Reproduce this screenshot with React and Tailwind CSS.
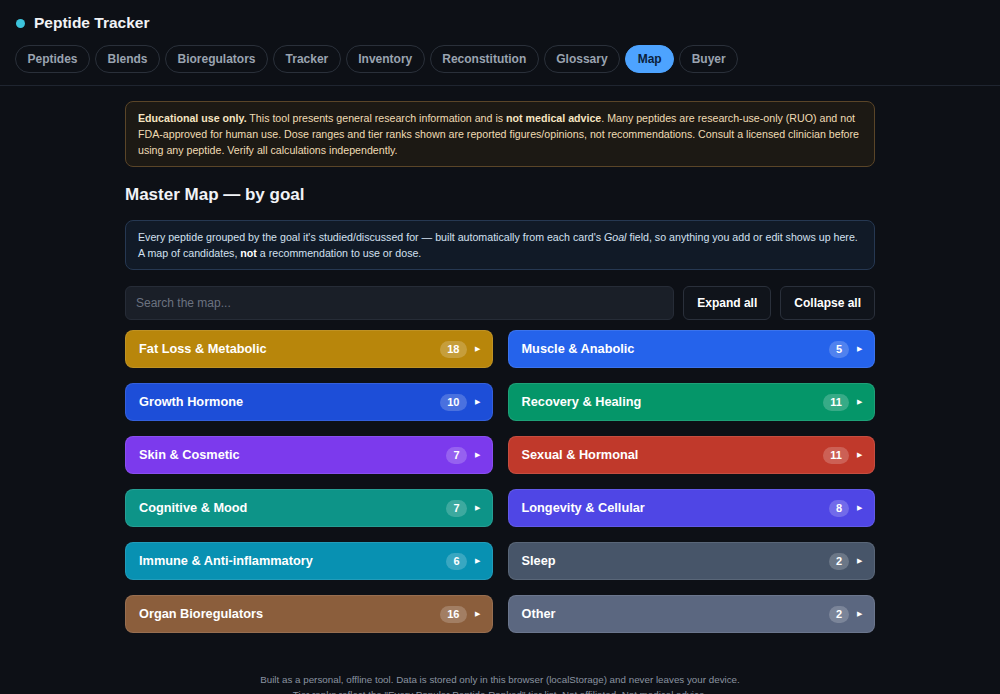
import React from "react";

const tabs = ["Peptides","Blends","Bioregulators","Tracker","Inventory","Reconstitution","Glossary","Map","Buyer"];

const groups = [
  ["Fat Loss & Metabolic", 18, "bg-[#b8860b]"],
  ["Muscle & Anabolic", 5, "bg-[#2563eb]"],
  ["Growth Hormone", 10, "bg-[#1d4ed8]"],
  ["Recovery & Healing", 11, "bg-[#059669]"],
  ["Skin & Cosmetic", 7, "bg-[#7c3aed]"],
  ["Sexual & Hormonal", 11, "bg-[#c0392b]"],
  ["Cognitive & Mood", 7, "bg-[#0d9488]"],
  ["Longevity & Cellular", 8, "bg-[#4f46e5]"],
  ["Immune & Anti-inflammatory", 6, "bg-[#0891b2]"],
  ["Sleep", 2, "bg-[#475569]"],
  ["Organ Bioregulators", 16, "bg-[#8b5e3c]"],
  ["Other", 2, "bg-[#5b6780]"],
];

export default function App() {
  return (
    <div className="min-h-screen bg-[#0d1016] text-white" style={{ fontFamily: '"Liberation Sans", Arial, sans-serif' }}>
      <header className="border-b border-[#1f2530] px-[15px] pt-[14px] pb-[12px]">
        <div className="flex items-center gap-[9px] pl-[1px] h-[18px]">
          <span className="w-[9px] h-[9px] rounded-full bg-[#3cc4dc]"></span>
          <span className="text-[15.5px] font-bold text-[#f1f3f6] leading-[18px]">Peptide Tracker</span>
        </div>
        <nav className="flex gap-[5px] mt-[13px]">
          {tabs.map((t) => (
            <span
              key={t}
              className={
                t === "Map"
                  ? "h-[28px] px-[11.5px] flex items-center rounded-full text-[12px] font-bold bg-[#4da3ff] border border-[#4da3ff] text-[#0b1f3c]"
                  : "h-[28px] px-[11.5px] flex items-center rounded-full text-[12px] font-bold border border-[#2a303a] text-[#9aa3b0]"
              }
            >
              {t}
            </span>
          ))}
        </nav>
      </header>

      <main className="w-[750px] mx-auto pt-[15px]">
        <div className="rounded-[8px] border border-[#5a4528] bg-[#1c1914] px-[12px] py-[8px] text-[10.65px] leading-[16px] text-[#f0dcb4]">
          <b className="text-[#f6e5c2]">Educational use only.</b> This tool presents general research information and is <b className="text-[#f6e5c2]">not medical advice</b>. Many peptides are research-use-only (RUO) and not FDA-approved for human use. Dose ranges and tier ranks shown are reported figures/opinions, not recommendations. Consult a licensed clinician before using any peptide. Verify all calculations independently.
        </div>

        <h2 className="text-[17px] font-bold text-[#f1f3f6] mt-[17px] leading-[22px]">Master Map — by goal</h2>

        <div className="mt-[14px] rounded-[8px] border border-[#263852] bg-[#111a27] px-[12px] py-[8px] text-[10.65px] leading-[16px] text-[#d3e0f0]">
          Every peptide grouped by the goal it's studied/discussed for — built automatically from each card's <i>Goal</i> field, so anything you add or edit shows up here. A map of candidates, <b className="text-white">not</b> a recommendation to use or dose.
        </div>

        <div className="flex gap-[9px] mt-[16px]">
          <div className="flex-1 h-[34px] rounded-[6px] border border-[#262c37] bg-[#1a1f28] px-[10px] flex items-center text-[12px] text-[#6b7280]">
            Search the map...
          </div>
          <button className="h-[34px] px-[13px] rounded-[6px] border border-[#2a303b] bg-[#10141b] text-[12px] font-bold text-white">Expand all</button>
          <button className="h-[34px] px-[13px] rounded-[6px] border border-[#2a303b] bg-[#10141b] text-[12px] font-bold text-white">Collapse all</button>
        </div>

        <div className="grid grid-cols-2 gap-x-[15px] gap-y-[15px] mt-[10px]">
          {groups.map(([name, n, bg]) => (
            <div key={name} className={`${bg} h-[38px] rounded-[8px] border border-white/10 flex items-center pl-[13px] pr-[12px]`}>
              <span className="flex-1 text-[12.75px] font-bold text-white -mt-[1px]">{name}</span>
              <span className="min-w-[20px] h-[17px] px-[7px] rounded-full bg-white/20 text-[11px] font-bold text-white flex items-center justify-center">{n}</span>
              <span className="ml-[8px] text-[7px] text-white">▶</span>
            </div>
          ))}
        </div>
      </main>

      <footer className="mt-[39px] text-center text-[9.8px] leading-[15px] text-[#8a93a0] pb-[10px]">
        <div>Built as a personal, offline tool. Data is stored only in this browser (localStorage) and never leaves your device.</div>
        <div>Tier ranks reflect the "Every Popular Peptide Ranked" tier list. Not affiliated. Not medical advice.</div>
      </footer>
    </div>
  );
}
